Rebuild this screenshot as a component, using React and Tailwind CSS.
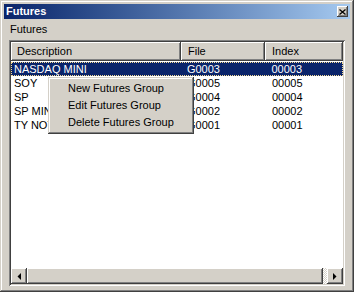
import React from 'react'

const raised =
  'bg-[#d4d0c8] shadow-[inset_-1px_-1px_0_#404040,inset_1px_1px_0_#ffffff,inset_-2px_-2px_0_#808080]'

const rows = [
  ['NASDAQ MINI', 'G0003', '00003'],
  ['SOY', 'G0005', '00005'],
  ['SP', 'G0004', '00004'],
  ['SP MINI', 'G0002', '00002'],
  ['TY NOTE', 'G0001', '00001'],
]

const Arrow = ({ dir }) => (
  <svg width="4" height="7" viewBox="0 0 4 7" className="block">
    {dir === 'left' ? (
      <path d="M4 0 L4 7 L0.5 3.5 Z" fill="#000" />
    ) : (
      <path d="M0 0 L0 7 L3.5 3.5 Z" fill="#000" />
    )}
  </svg>
)

export default function App() {
  return (
    <div className="relative w-[354px] h-[292px] bg-[#d4d0c8] font-['Liberation_Sans',Arial,sans-serif] text-[11px] text-black shadow-[inset_-1px_-1px_0_#404040,inset_1px_1px_0_#d4d0c8,inset_-2px_-2px_0_#808080,inset_2px_2px_0_#ffffff] p-[4px] flex flex-col overflow-hidden">
      {/* title bar */}
      <div className="h-[15px] flex items-center justify-between bg-linear-to-r from-[#0a246a] to-[#a6caf0] pl-[2px] pr-[2px]">
        <span className="text-white font-bold leading-none">Futures</span>
        <div className={`w-[11px] h-[11px] flex items-center justify-center ${raised}`}>
          <svg width="7" height="6" viewBox="0 0 7 6">
            <path d="M0.5 0.5 L6.5 5.5 M6.5 0.5 L0.5 5.5" stroke="#000" strokeWidth="1.3" />
          </svg>
        </div>
      </div>

      {/* label */}
      <div className="h-[21px] pl-[6px] flex items-center">Futures</div>

      {/* list view */}
      <div className="mx-[5px] mb-[2px] flex-1 flex flex-col bg-white p-[2px] shadow-[inset_1px_1px_0_#808080,inset_-1px_-1px_0_#ffffff,inset_2px_2px_0_#404040,inset_-2px_-2px_0_#d4d0c8]">
        <div className="flex h-[19px]">
          <div className={`w-[170px] pl-[6px] flex items-center ${raised}`}>Description</div>
          <div className={`w-[84px] pl-[7px] flex items-center ${raised}`}>File</div>
          <div className={`w-[78px] pl-[7px] flex items-center ${raised}`}>Index</div>
        </div>

        <div className="flex-1 pt-[1px]">
          {rows.map((r, i) => (
            <div
              key={r[0]}
              className={`flex h-[14px] items-center w-[332px] ${
                i === 0 ? 'bg-[#0a246a] text-white border border-dotted border-[#f5db95]' : ''
              }`}
            >
              <div className={`w-[170px] ${i === 0 ? 'pl-[2px]' : 'pl-[3px]'} whitespace-nowrap`}>{r[0]}</div>
              <div className="w-[84px] pl-[6px]">{r[1]}</div>
              <div className="w-[78px] pl-[7px]">{r[2]}</div>
            </div>
          ))}
        </div>

        {/* horizontal scrollbar */}
        <div className="flex h-[16px]">
          <div className={`w-[16px] flex items-center justify-center ${raised}`}>
            <Arrow dir="left" />
          </div>
          <div className={`w-[296px] ${raised}`} />
          <div className="flex-1 bg-[repeating-conic-gradient(#ffffff_0%_25%,#d4d0c8_0%_50%)] bg-size-[2px_2px]" />
          <div className={`w-[16px] flex items-center justify-center ${raised}`}>
            <Arrow dir="right" />
          </div>
        </div>
      </div>

      {/* context menu */}
      <div className="absolute left-[48px] top-[77px] w-[146px] bg-[#d4d0c8] p-[3px] shadow-[inset_-1px_-1px_0_#404040,inset_1px_1px_0_#d4d0c8,inset_-2px_-2px_0_#808080,inset_2px_2px_0_#ffffff]">
        {['New Futures Group', 'Edit Futures Group', 'Delete Futures Group'].map((t) => (
          <div key={t} className="h-[17px] pl-[17px] flex items-center whitespace-nowrap">
            {t}
          </div>
        ))}
      </div>
    </div>
  )
}
